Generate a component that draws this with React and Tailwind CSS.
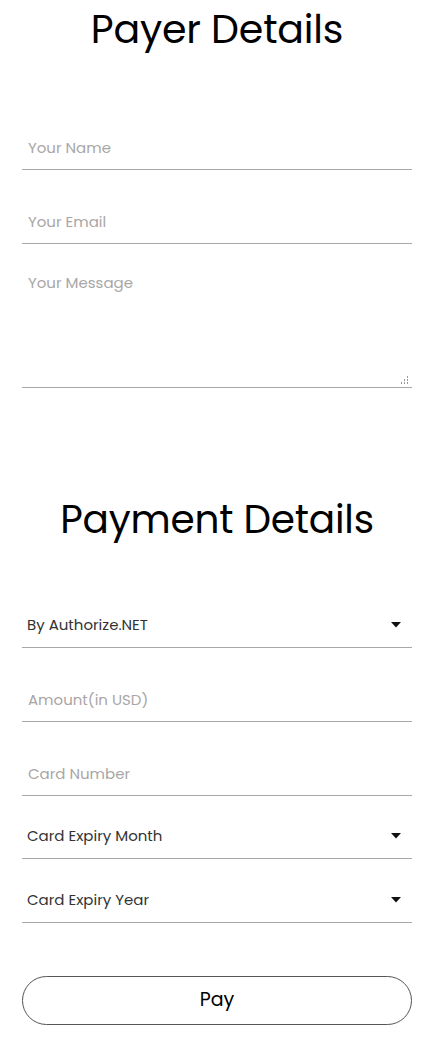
import { useState } from "react";

function Caret() {
  return (
    <svg width="10" height="6" viewBox="0 0 10 6" className="shrink-0">
      <path d="M0 0 L10 0 L5 5.5 Z" fill="#111" />
    </svg>
  );
}

function ResizeDots() {
  const dots = [
    [8, 0],
    [8, 3],
    [5, 3],
    [8, 6],
    [5, 6],
    [2, 6],
  ];
  return (
    <svg
      width="10"
      height="9"
      viewBox="0 0 10 9"
      className="absolute right-[3px] bottom-[3px] pointer-events-none"
    >
      {dots.map(([x, y], i) => (
        <rect key={i} x={x} y={y} width="1" height="2" fill="#9a9a9a" />
      ))}
    </svg>
  );
}

function SelectField({ label, className = "" }) {
  return (
    <div
      className={`flex items-center justify-between h-[45px] pl-[5px] pr-[11px] border-b border-[#a9a6a7] text-[15px] text-[#333] ${className}`}
    >
      <span>{label}</span>
      <Caret />
    </div>
  );
}

export default function App() {
  const [name, setName] = useState("");
  const [email, setEmail] = useState("");
  const [message, setMessage] = useState("");
  const [amount, setAmount] = useState("");
  const [card, setCard] = useState("");

  const inputCls =
    "w-full h-[45px] px-[6px] border-b border-[#a9a6a7] bg-white text-[15px] text-[#333] placeholder:text-[#a9a6a6] outline-none";

  return (
    <div
      className="min-h-screen bg-white pl-[22px] pr-[26px]"
      style={{ fontFamily: "Poppins, Inter, 'Noto Sans', sans-serif" }}
    >
      <h1 className="pt-[6px] text-center text-[39.5px] leading-[48px] font-normal text-black tracking-[-0.2px]">
        Payer Details
      </h1>

      <form onSubmit={(e) => e.preventDefault()} className="flex flex-col">
        <input
          className={`${inputCls} mt-[71px]`}
          placeholder="Your Name"
          value={name}
          onChange={(e) => setName(e.target.value)}
        />
        <input
          className={`${inputCls} mt-[29px]`}
          placeholder="Your Email"
          value={email}
          onChange={(e) => setEmail(e.target.value)}
        />
        <div className="relative mt-[19px]">
          <textarea
            className="block w-full h-[125px] px-[6px] pt-[9px] border-b border-[#a9a6a7] bg-white text-[15px] leading-[22px] text-[#333] placeholder:text-[#a9a6a6] outline-none resize-none"
            placeholder="Your Message"
            value={message}
            onChange={(e) => setMessage(e.target.value)}
          />
          <ResizeDots />
        </div>

        <h2 className="mt-[108px] text-center text-[39px] leading-[48px] font-normal text-black tracking-[-0.2px]">
          Payment Details
        </h2>

        <SelectField label="By Authorize.NET" className="mt-[59px]" />
        <input
          className={`${inputCls} mt-[29px]`}
          placeholder="Amount(in USD)"
          value={amount}
          onChange={(e) => setAmount(e.target.value)}
        />
        <input
          className={`${inputCls} mt-[29px]`}
          placeholder="Card Number"
          value={card}
          onChange={(e) => setCard(e.target.value)}
        />
        <SelectField label="Card Expiry Month" className="mt-[18px]" />
        <SelectField label="Card Expiry Year" className="mt-[19px]" />

        <button
          type="submit"
          className="mt-[53px] h-[49px] w-full rounded-full border border-[#555] bg-white text-[19px] text-black"
        >
          Pay
        </button>
      </form>
    </div>
  );
}
